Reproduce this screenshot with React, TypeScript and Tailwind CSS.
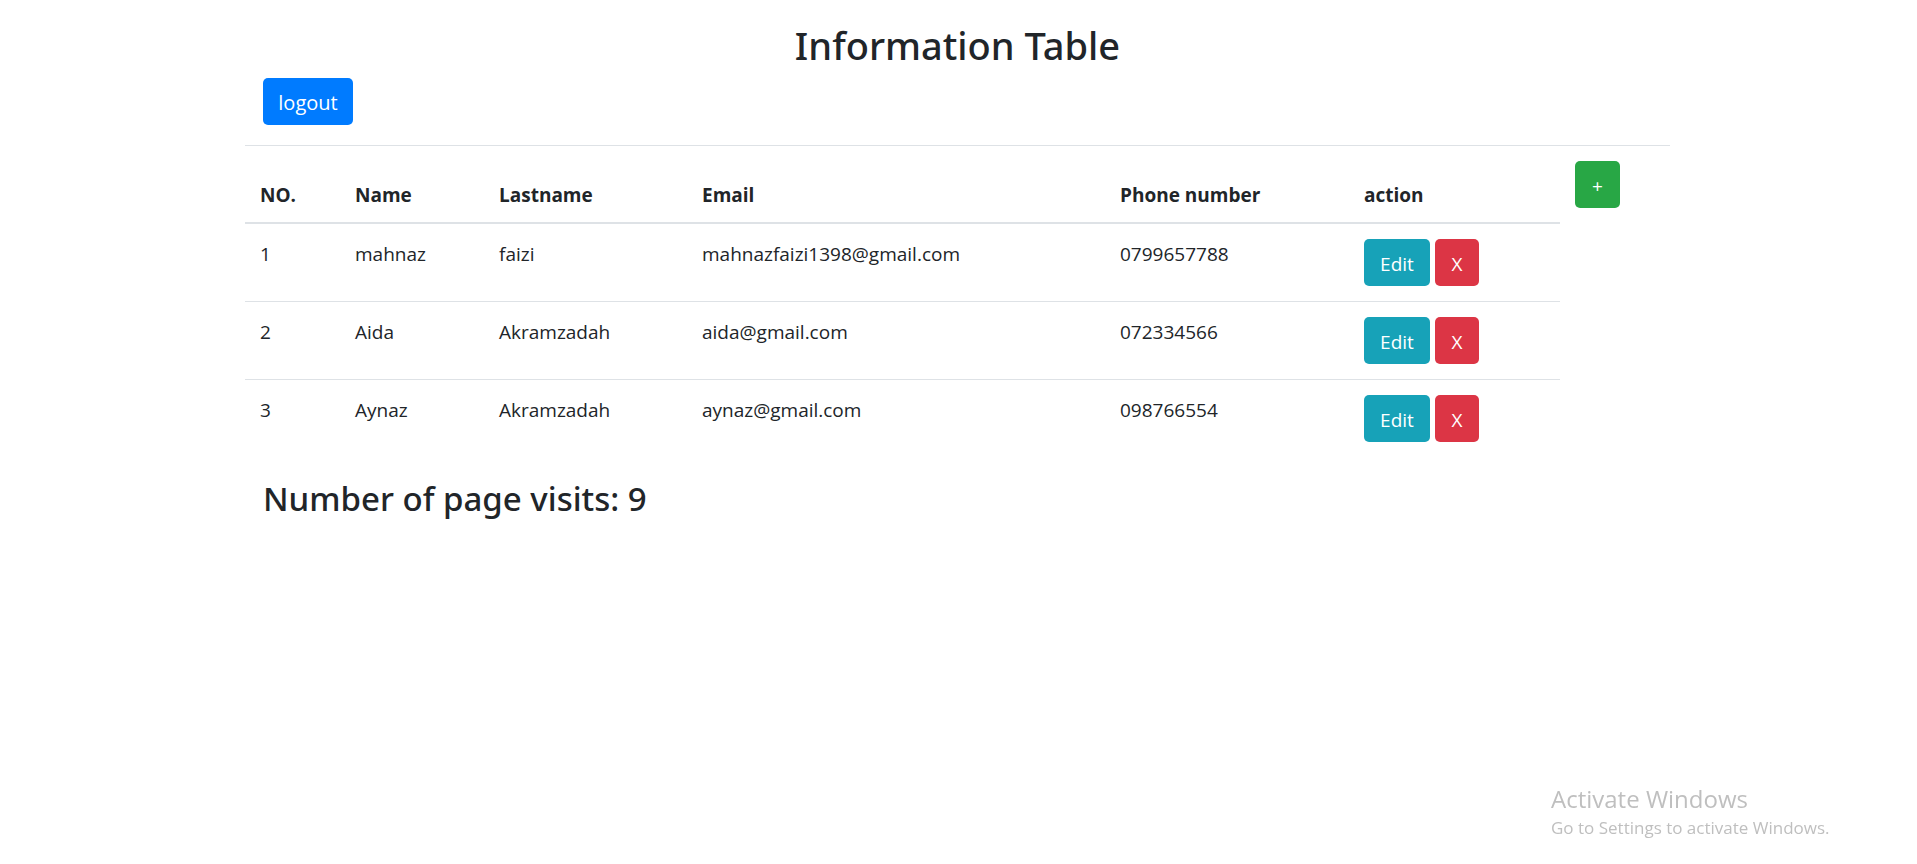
import React from "react";

type Person = {
  id: number;
  name: string;
  lastname: string;
  email: string;
  phone: string;
};

const people: Person[] = [
  { id: 1, name: "mahnaz", lastname: "faizi", email: "mahnazfaizi1398@gmail.com", phone: "0799657788" },
  { id: 2, name: "Aida", lastname: "Akramzadah", email: "aida@gmail.com", phone: "072334566" },
  { id: 3, name: "Aynaz", lastname: "Akramzadah", email: "aynaz@gmail.com", phone: "098766554" },
];

const columns = ["NO.", "Name", "Lastname", "Email", "Phone number", "action"];

const buttonBase = "h-[47px] cursor-pointer rounded-[5px] pt-[3px] text-white";
const headCell = "border-t border-b-2 border-[#dee2e6] px-[15px] pb-3 align-bottom font-bold";
const firstRowCell = "px-[15px] py-[15px] align-top";
const bodyCell = "border-t border-[#dee2e6] px-[15px] py-[15px] align-top";

export default function App() {
  return (
    <div className="min-h-screen bg-white pr-0.5 font-['Open_Sans','Noto_Sans',sans-serif] text-[19px] leading-[30px] text-[#212529]">
      <main className="mx-auto max-w-[1425px] pt-5">
        <h1 className="mb-2 text-center font-['Noto_Sans','Open_Sans',sans-serif] text-[38px] leading-[50px] font-medium">
          Information Table
        </h1>
        <div className="mb-5 flex px-[18px]">
          <button type="button" className={`${buttonBase} w-[90px] bg-[#007bff] text-xl`}>
            logout
          </button>
        </div>
        <table className="w-full table-fixed border-separate border-spacing-0 text-left">
          <colgroup>
            <col className="w-[95px]" />
            <col className="w-36" />
            <col className="w-[203px]" />
            <col />
            <col className="w-[244px]" />
            <col className="w-[211px]" />
            <col className="w-[110px]" />
          </colgroup>
          <thead>
            <tr>
              {columns.map((label) => (
                <th key={label} scope="col" className={headCell}>
                  {label}
                </th>
              ))}
              <td className="border-t border-[#dee2e6] px-[15px] pt-[15px] pb-4 align-top">
                <button type="button" className={`${buttonBase} block w-[45px] bg-[#28a745]`}>
                  +
                </button>
              </td>
            </tr>
          </thead>
          <tbody>
            {people.map((person, index) => {
              const cell = index === 0 ? firstRowCell : bodyCell;
              return (
                <tr key={person.id}>
                  <td className={cell}>{person.id}</td>
                  <td className={cell}>{person.name}</td>
                  <td className={cell}>{person.lastname}</td>
                  <td className={cell}>{person.email}</td>
                  <td className={cell}>{person.phone}</td>
                  <td className={cell}>
                    <div className="flex gap-[5px]">
                      <button type="button" className={`${buttonBase} w-[66px] bg-[#17a2b8]`}>
                        Edit
                      </button>
                      <button type="button" className={`${buttonBase} w-11 bg-[#dc3545]`}>
                        X
                      </button>
                    </div>
                  </td>
                </tr>
              );
            })}
          </tbody>
        </table>
        <h2 className="mt-5 px-[18px] font-['Noto_Sans','Open_Sans',sans-serif] text-[33px] leading-[44px] font-medium">
          Number of page visits: 9
        </h2>
      </main>
      <aside className="pointer-events-none fixed right-20 bottom-5 w-[286px] whitespace-nowrap text-[#bfbfbf]">
        <p className="text-2xl leading-[32px]">Activate Windows</p>
        <p className="pb-[3px] text-[17px] leading-[26px]">Go to Settings to activate Windows.</p>
      </aside>
    </div>
  );
}
